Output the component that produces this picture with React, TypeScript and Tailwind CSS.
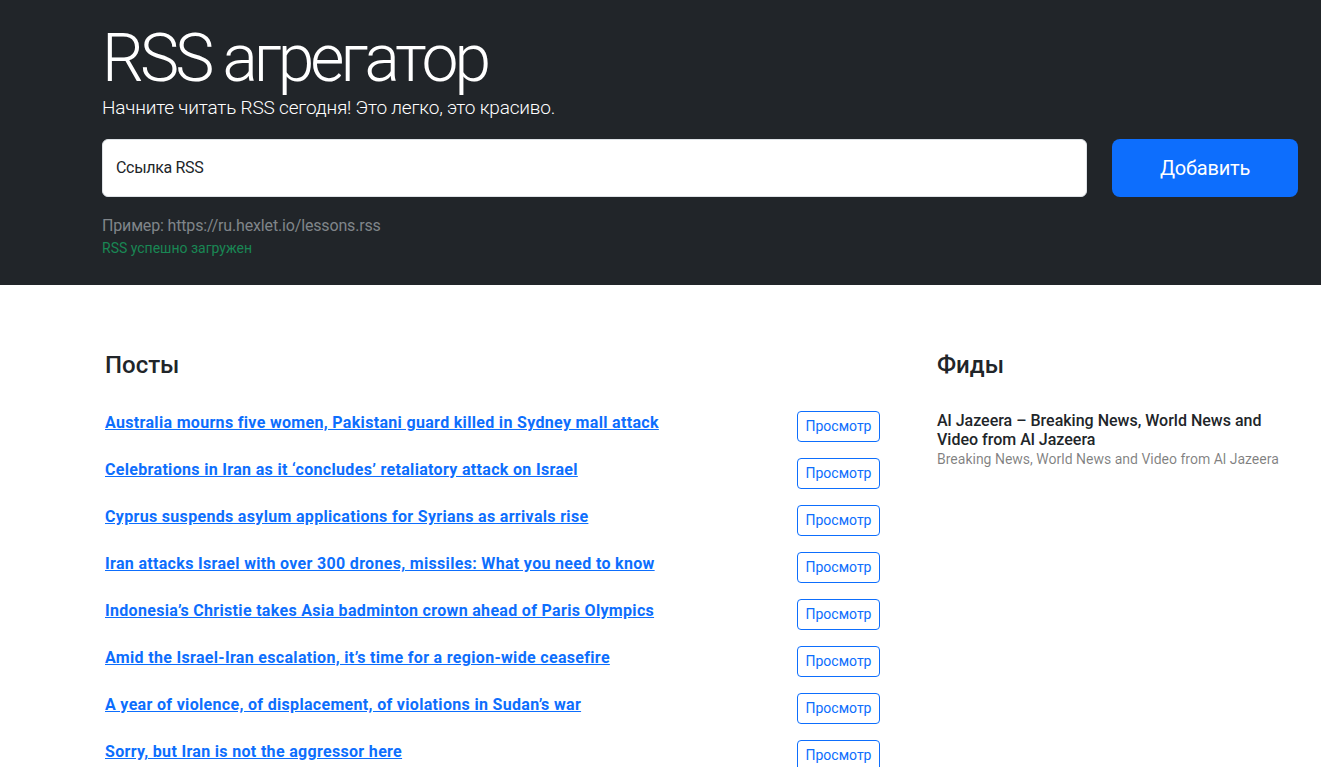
import React from 'react';

const posts = [
  'Australia mourns five women, Pakistani guard killed in Sydney mall attack',
  'Celebrations in Iran as it ‘concludes’ retaliatory attack on Israel',
  'Cyprus suspends asylum applications for Syrians as arrivals rise',
  'Iran attacks Israel with over 300 drones, missiles: What you need to know',
  'Indonesia’s Christie takes Asia badminton crown ahead of Paris Olympics',
  'Amid the Israel-Iran escalation, it’s time for a region-wide ceasefire',
  'A year of violence, of displacement, of violations in Sudan’s war',
  'Sorry, but Iran is not the aggressor here',
];

function App() {
  return (
    <div className="min-h-screen bg-white font-['Roboto',sans-serif] text-[#212529]">
      {/* header with form */}
      <section className="bg-[#212529] h-[285px] pl-[102px] pr-[23px] pt-[19px] text-white">
        <h1 className="text-[66px] font-light leading-[1.2] tracking-[-0.06em]">RSS агрегатор</h1>
        <p className="text-[19px] font-light leading-[1.5] tracking-[-0.01em] mt-[-4px]">
          Начните читать RSS сегодня! Это легко, это красиво.
        </p>
        <form className="flex gap-[25px] mt-[16px]" onSubmit={(e) => e.preventDefault()}>
          <div className="flex-1 h-[58px] bg-white rounded-[6px] border border-[#dee2e6] flex items-center px-[13px]">
            <span className="text-[16px] tracking-[-0.02em] text-[#212529]">Ссылка RSS</span>
          </div>
          <button
            type="submit"
            className="w-[186px] h-[58px] rounded-[8px] bg-[#0d6efd] text-white text-[20px] tracking-[-0.01em]"
          >
            Добавить
          </button>
        </form>
        <p className="mt-[17px] text-[16px] leading-[24px] tracking-[-0.01em] text-[#80858a]">
          Пример: https://ru.hexlet.io/lessons.rss
        </p>
        <p className="text-[14px] leading-[21px] text-[#198754]">RSS успешно загружен</p>
      </section>

      {/* posts and feeds */}
      <section className="flex pt-[66px] pl-[105px]">
        <div className="w-[775px]">
          <h2 className="text-[24px] font-medium leading-[1.2]">Посты</h2>
          <ul className="mt-[23px]">
            {posts.map((title) => (
              <li key={title} className="flex justify-between items-start py-[8px]">
                <a
                  href="#"
                  className="text-[16px] leading-[24px] font-bold tracking-[0.02em] text-[#0d6efd] underline"
                >
                  {title}
                </a>
                <button className="h-[31px] w-[83px] rounded-[4px] border border-[#0d6efd] text-[#0d6efd] text-[14px]">
                  Просмотр
                </button>
              </li>
            ))}
          </ul>
        </div>
        <div className="ml-[57px] w-[345px]">
          <h2 className="text-[24px] font-medium leading-[1.2]">Фиды</h2>
          <div className="mt-[31px]">
            <h3 className="text-[16px] font-medium leading-[1.2]">
              Al Jazeera – Breaking News, World News and Video from Al Jazeera
            </h3>
            <p className="text-[14px] leading-[21px] text-black/50">
              Breaking News, World News and Video from Al Jazeera
            </p>
          </div>
        </div>
      </section>
    </div>
  );
}

export default App;
